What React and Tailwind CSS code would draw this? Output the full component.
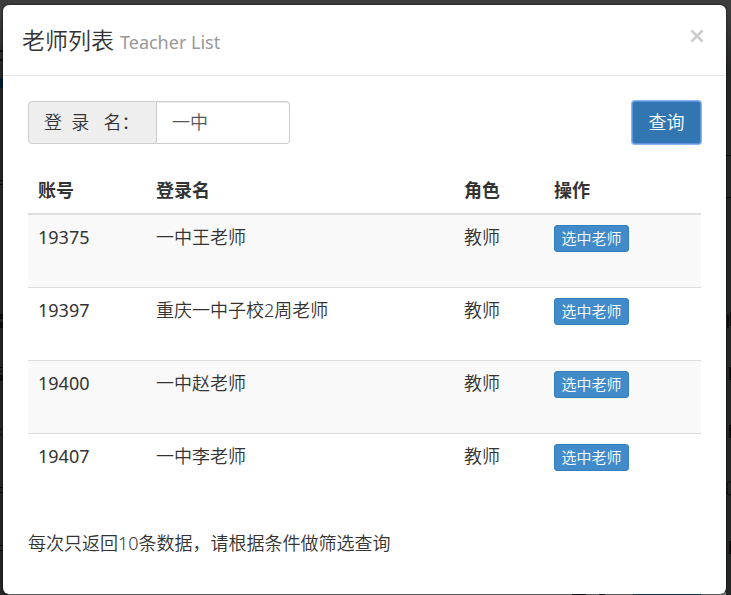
import React from "react";

const teachers = [
  { id: 19375, name: "一中王老师", role: "教师" },
  { id: 19397, name: "重庆一中子校2周老师", role: "教师" },
  { id: 19400, name: "一中赵老师", role: "教师" },
  { id: 19407, name: "一中李老师", role: "教师" },
];

function Backdrop() {
  return (
    <svg aria-hidden="true" className="absolute inset-0 -z-10 h-full w-full">
      <g fill="#0c0c0c">
        <path d="M0 50h3v2H0zM0 59h3v2H0zM0 180h3v1H0zM0 184h3v1H0zM0 314h3v5H0zM0 322h3v6H0zM0 367h3v1H0zM0 371h3v1H0zM0 375h3v6H0zM0 429h3v1H0zM0 434h3v1H0zM0 487h3v1H0zM0 492h3v1H0zM0 545h3v1H0zM0 550h3v1H0z" />
        <path d="M726 155h5v1h-5zM726 197h5v1h-5zM727 315h2v13h-2zM730 312h1v14h-1zM729 367h2v13h-2zM729 425h2v13h-2zM729 541h2v13h-2z" />
        <rect x="727" y="482" width="9" height="13" rx="3" fill="none" stroke="#0c0c0c" />
      </g>
      <rect x="0" y="78" width="3" height="10" fill="#031b2d" />
      <rect x="8" y="592" width="718" height="3" fill="#7b7b7b" />
      <path d="M572 592h14v3h-14zM599 592h6v3h-6z" fill="#17171c" />
      <rect x="633" y="592" width="68" height="3" fill="#184768" />
    </svg>
  );
}

export default function App() {
  return (
    <div className="relative isolate min-h-screen bg-linear-to-b from-[#3c3c3c] from-2% to-[#242525] to-12% pt-[5px] pr-[5px] pb-px pl-[3px] font-['Noto_Sans','Noto_Sans_CJK_SC',sans-serif] text-lg leading-[25px] font-[350] text-[#333333]">
      <Backdrop />
      <section role="dialog" aria-labelledby="title" className="rounded-md bg-white shadow-[0_0_2px_#000000]">
        <header className="flex h-[71px] items-center justify-between border-b border-[#e5e5e5] px-[19px] pt-1">
          <h4 id="title" className="text-[23px]">
            老师列表 <small className="text-lg font-normal text-[#999999]">Teacher List</small>
          </h4>
          <button type="button" aria-label="关闭" className="mb-3 flex h-5 w-5 items-center justify-center text-[#cccccc]">
            <svg width="14" height="14" viewBox="0 0 14 14" fill="none" stroke="currentColor" strokeWidth="2.6">
              <path d="M1.5 1.5 12.5 12.5M12.5 1.5 1.5 12.5" />
            </svg>
          </button>
        </header>
        <div className="px-[25px] pt-[25px] pb-[38px]">
          <form className="flex items-center justify-between" onSubmit={(e) => e.preventDefault()}>
            <div className="flex h-[43px] w-[262px]">
              <label htmlFor="login" className="flex w-[129px] shrink-0 items-center rounded-l border border-[#cccccc] bg-[#eeeeee] pl-[15px] whitespace-pre">
                {"登\u00a0\u00a0录\u00a0\u00a0\u00a0名："}
              </label>
              <input id="login" defaultValue="一中" className="min-w-0 flex-1 rounded-r border border-l-0 border-[#cccccc] px-[15px] text-[#555555] shadow-[inset_0_1px_1px_#00000013] outline-none" />
            </div>
            <button type="submit" className="h-[43px] w-[69px] rounded-[3px] border border-[#5b93dc] bg-[#3276b1] text-white ring-1 ring-[#8ab4f5]">查询</button>
          </form>
          <table className="mt-6 w-full table-fixed border-collapse text-left">
            <thead>
              <tr className="h-[46px] border-b-2 border-[#dddddd]">
                <th className="w-[118px] px-[10px] font-bold">账号</th>
                <th className="px-[10px] font-bold">登录名</th>
                <th className="w-[90px] px-[10px] font-bold">角色</th>
                <th className="w-[157px] px-[10px] font-bold">操作</th>
              </tr>
            </thead>
            <tbody>
              {teachers.map((t) => (
                <tr key={t.id} className="h-[73px] border-t border-[#dddddd] align-top odd:bg-[#f9f9f9]">
                  <td className="px-[10px] pt-[10px] font-normal">{t.id}</td>
                  <td className="px-[10px] pt-[10px]">{t.name}</td>
                  <td className="px-[10px] pt-[10px]">{t.role}</td>
                  <td className="px-[10px] pt-[10px]">
                    <button type="button" className="block h-[27px] w-[75px] rounded-[3px] border border-[#357ebd] bg-[#428bca] text-[15px] leading-[25px] text-white">选中老师</button>
                  </td>
                </tr>
              ))}
            </tbody>
          </table>
          <p className="mt-[25px]">每次只返回10条数据，请根据条件做筛选查询</p>
        </div>
      </section>
    </div>
  );
}
